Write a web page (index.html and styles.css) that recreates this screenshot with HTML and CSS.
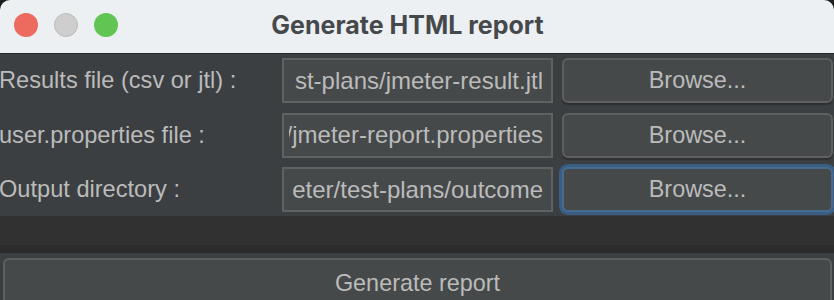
FILE: index.html
```html
<!DOCTYPE html>
<html lang="en">
<head>
  <meta charset="UTF-8" />
  <meta name="viewport" content="width=device-width, initial-scale=1.0" />
  <title>Generate HTML report</title>
  <link rel="stylesheet" href="styles.css">
</head>
<body>
  <div class="window">
    <header class="titlebar">
      <div class="lights">
        <span class="light close"></span>
        <span class="light minimize"></span>
        <span class="light zoom"></span>
      </div>
      <h1>Generate HTML report</h1>
    </header>

    <main>
      <section class="form">
        <label class="label">Results file (csv or jtl) :</label>
        <div class="field"><div class="field-clip"><span>st-plans/jmeter-result.jtl</span></div></div>
        <button class="browse">Browse...</button>

        <label class="label">user.properties file :</label>
        <div class="field"><div class="field-clip"><span>/jmeter-report.properties</span></div></div>
        <button class="browse">Browse...</button>

        <label class="label">Output directory :</label>
        <div class="field"><div class="field-clip"><span>eter/test-plans/outcome</span></div></div>
        <button class="browse focused">Browse...</button>
      </section>

      <div class="spacer"></div>

      <section class="footer">
        <button class="generate">Generate report</button>
      </section>
    </main>
  </div>
</body>
</html>
```

FILE: styles.css
```css
body {
  margin: 0;
  padding: 0;
  background: #1f1f1f;
  font-family: "Liberation Sans", Arial, sans-serif;
  overflow: hidden;
}
.window {
  height: 300px;
  background: #3c3f41;
  border-radius: 10px 10px 0 0;
  overflow: hidden;
}
.titlebar {
  height: 53px;
  background: #ecf0f2;
  border-bottom: 1px solid #262829;
  display: flex;
  align-items: center;
  justify-content: center;
  position: relative;
}
.titlebar h1 {
  margin: 0 19px 3px 0;
  font-family: Inter, "Liberation Sans", sans-serif;
  font-size: 25px;
  font-weight: 700;
  color: #46494b;
}
.lights {
  position: absolute;
  left: 14px;
  top: 13px;
  display: flex;
  gap: 16px;
}
.light {
  width: 24px;
  height: 24px;
  border-radius: 50%;
  box-sizing: border-box;
}
.light.close {
  background: #ec6a5e;
}
.light.minimize {
  background: #cecece;
  border: 1px solid #bcbcbc;
}
.light.zoom {
  background: #61c554;
}
.form {
  display: grid;
  grid-template-columns: 273px 271px 271px;
  grid-auto-rows: 45px;
  column-gap: 9px;
  row-gap: 9.5px;
  padding: 4px 1px 4px 0;
}
.label {
  display: flex;
  align-items: center;
  font-size: 23.6px;
  color: #bbbbbb;
  margin-left: -1px;
  white-space: nowrap;
}
.field {
  background: #45494a;
  border: 2px solid #5f6263;
  box-sizing: border-box;
  padding: 0 8px 0 5px;
  display: flex;
  align-items: center;
}
.field-clip {
  flex: 1;
  overflow: hidden;
  display: flex;
  justify-content: flex-end;
  white-space: nowrap;
  font-size: 24px;
  color: #bbbbbb;
}
.field-clip span {
  flex-shrink: 0;
}
button {
  font-family: "Liberation Sans", Arial, sans-serif;
  font-size: 23.4px;
  color: #bbbbbb;
  background: #45494a;
  border: 2px solid #5e6060;
  border-radius: 6px;
  padding: 0;
  cursor: pointer;
}
.browse {
  box-shadow: 0 2px 1px rgba(0, 0, 0, 0.25);
}
.browse.focused {
  border-color: #466a90;
  box-shadow: 0 0 0 3px #3a5d83;
}
.spacer {
  height: 29px;
  background: #313131;
  border-bottom: 8px solid #2b2b2b;
}
.footer {
  padding: 5px 2px 0 3px;
}
.generate {
  width: 100%;
  height: 50px;
  padding-top: 1px;
}
```
